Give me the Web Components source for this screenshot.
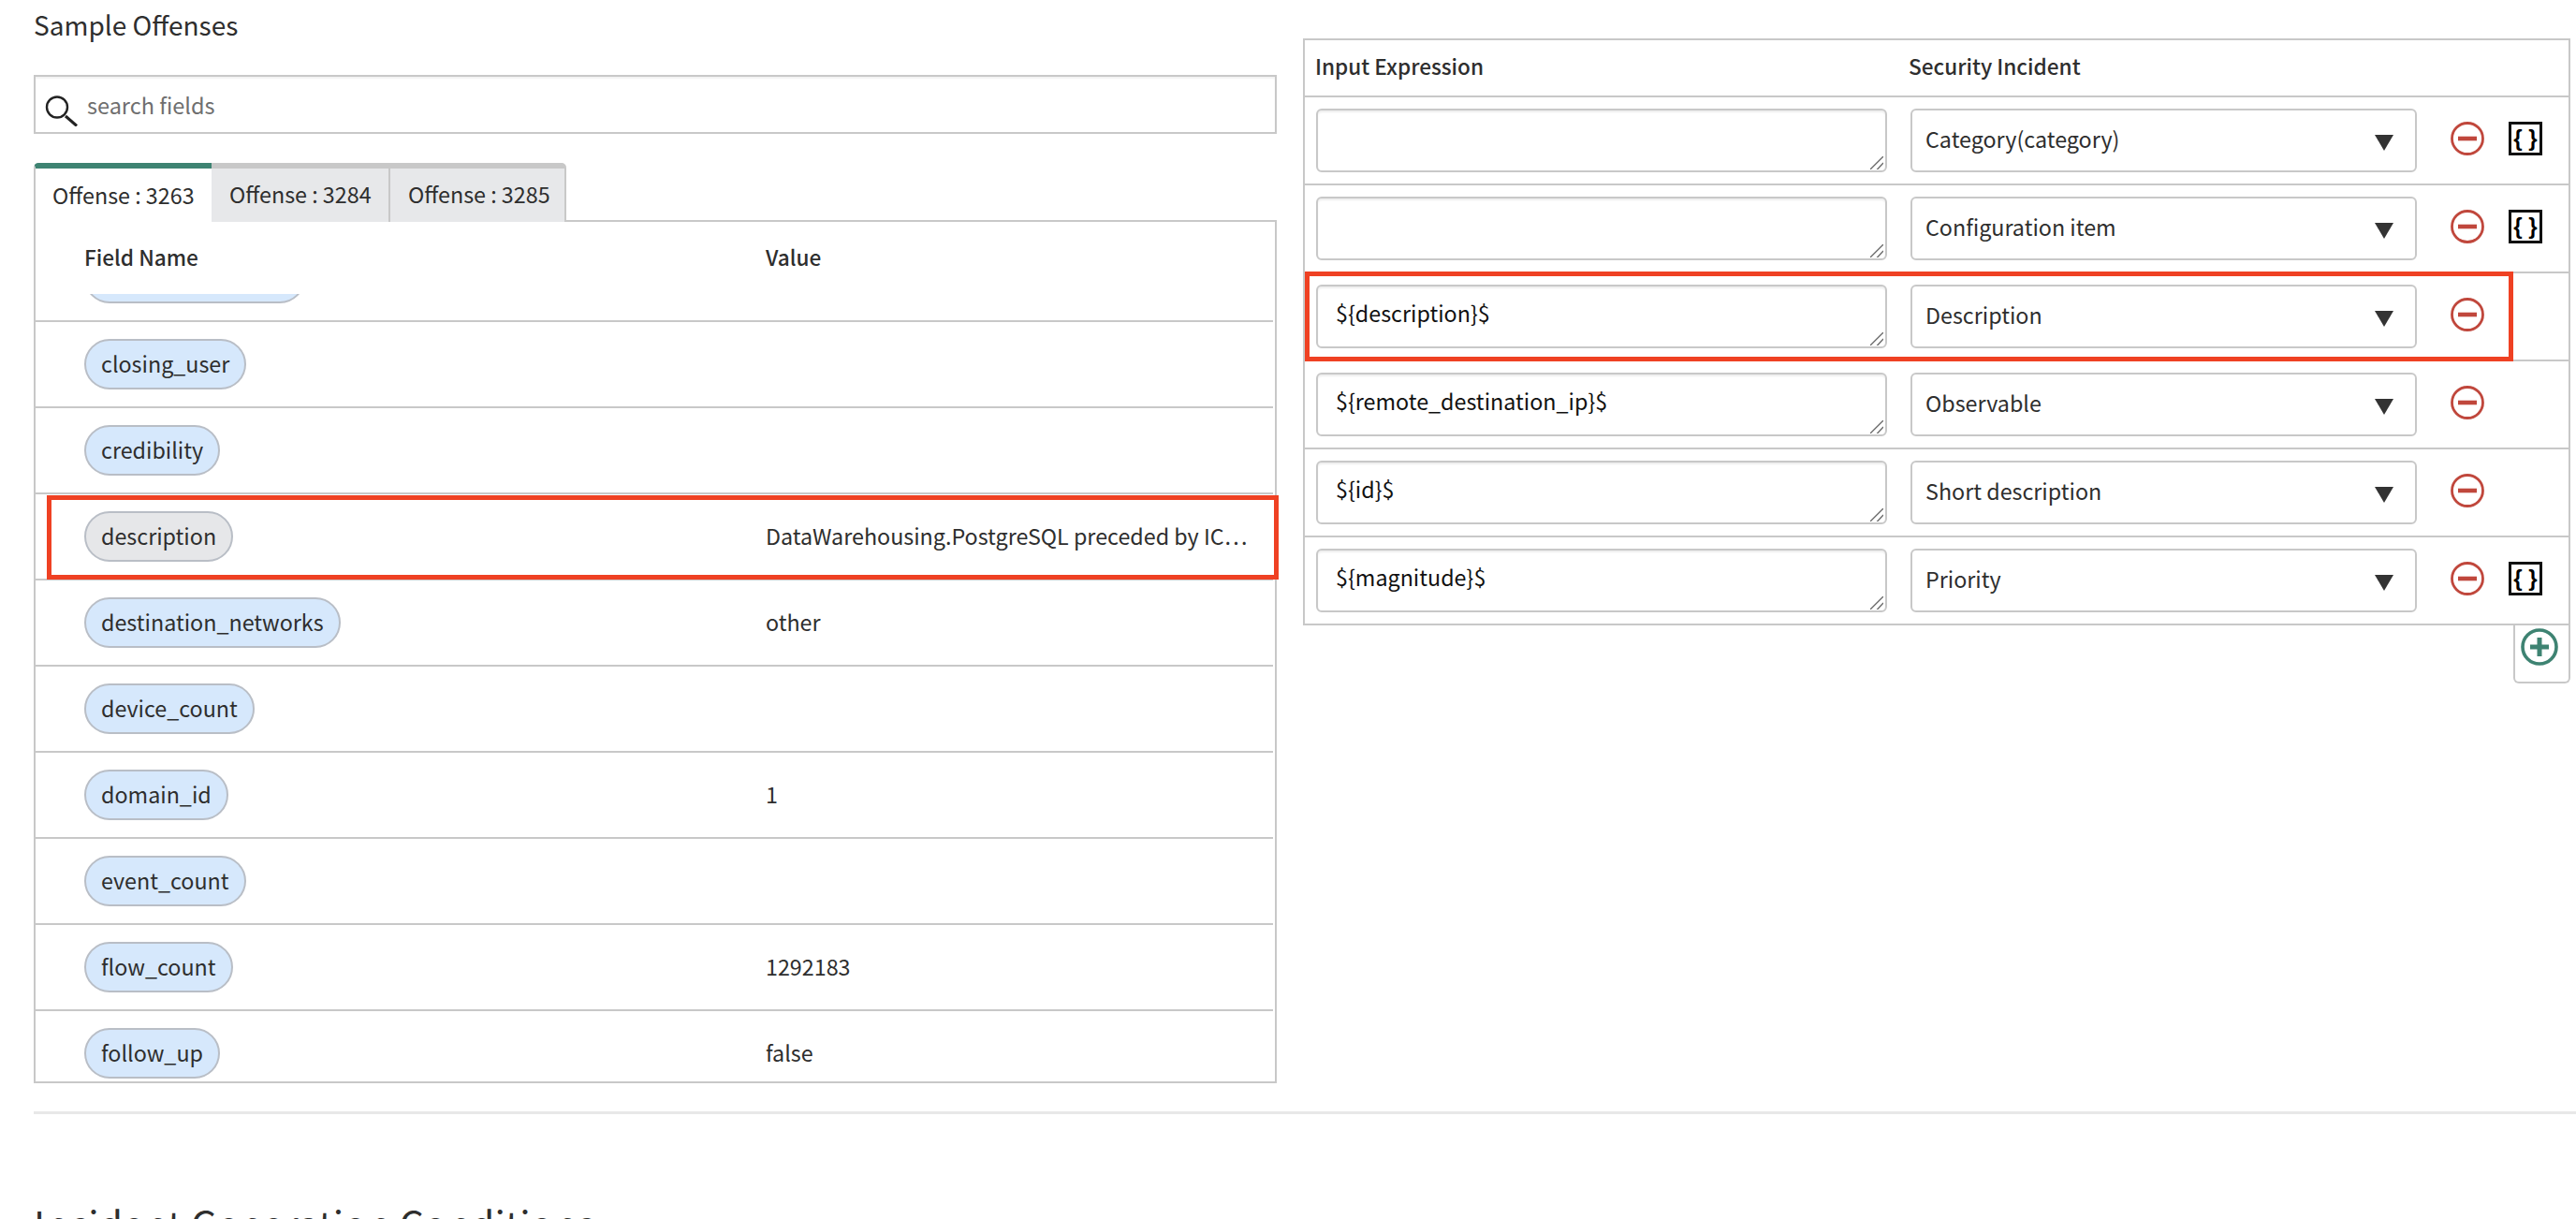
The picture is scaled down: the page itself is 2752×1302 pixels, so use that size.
<!DOCTYPE html>
<html><head><meta charset="utf-8">
<style>
html,body{margin:0;padding:0;background:#fff;height:1302px;overflow:hidden}
body{font-family:"Noto Sans CJK SC","Liberation Sans",sans-serif;color:#2e2e2e}
</style></head>
<body>
<template id="t-mapping"><style>
:host{display:block;height:1302px;overflow:hidden;box-sizing:border-box;padding:0 0 0 36px}
.cols{display:flex;align-items:flex-start;height:1187px}
.left{width:1328px;flex:none}
.right{width:1354px;flex:none;margin:41px 0 0 28px}
hr{border:0;height:3px;background:#e8e8e8;margin:0}
h2{font-size:41.2px;line-height:56px;font-weight:400;margin:88px 0 0;color:#2e2e2e;white-space:nowrap}
</style>
<div class="cols"><div class="left"><slot name="left"></slot></div><div class="right"><slot name="right"></slot></div></div>
<hr><h2><slot name="heading"></slot></h2></template>

<template id="t-sample"><style>
:host{display:block;position:relative}
.title{font-size:28px;line-height:40px;padding-top:6px;height:80px;box-sizing:border-box;color:#2e2e2e}
.search{height:63px;box-sizing:border-box;border:2px solid #c8c8c8;display:flex;align-items:center;gap:9px;padding:0 0 0 10px;font-size:23.5px;color:#6f6f6f;box-shadow:inset 0 2px 2px #f2f2f2}
.tabs{display:flex;margin-top:31px;height:63px;box-sizing:border-box;border-bottom:2px solid #c8c8c8}
.box{box-sizing:border-box;border:2px solid #c8c8c8;border-top:0;height:920px;display:flex;flex-direction:column;padding-right:2px}
.head{height:77px;flex:none;box-sizing:border-box;padding:0 0 3px 52px;display:flex;align-items:center;font-size:22.6px;font-weight:500;color:#2e2e2e}
.body{flex:1;overflow:hidden;min-height:0}
.mark{position:absolute;left:14px;top:529px;width:1316px;height:90px;box-sizing:border-box;border:5px solid #ef4123;pointer-events:none}
svg{display:block}
</style>
<div class="title"><slot name="title"></slot></div>
<div class="search"><svg width="36" height="46" viewBox="0 0 36 46" fill="none" stroke="#222"><circle cx="13" cy="25.5" r="11" stroke-width="2.4"/><path d="M22 35L34 45.5" stroke-width="3"/></svg><span><slot name="placeholder"></slot></span></div>
<div class="tabs"><slot name="tabs"></slot></div>
<div class="box"><div class="head"><slot name="head"></slot></div><div class="body"><slot></slot></div></div>
<div class="mark"></div></template>

<template id="t-tab"><style>
:host{display:flex;align-items:center;box-sizing:border-box;height:63px;width:191px;border-top:6px solid #c8c8c8;background:#e7e8ea;font-size:23.3px;color:#2e2e2e;padding:0 0 3px 19px;border-right:2px solid #c8c8c8;white-space:nowrap}
:host([active]){background:#fff;border-top-color:#3e8372;border-right:0;border-left:2px solid #c8c8c8;height:65px;width:190px;border-top-left-radius:5px;padding:0 0 3px 18px}
:host([last]){border-top-right-radius:5px;width:188px}
</style><slot></slot></template>

<template id="t-row"><style>
:host{display:flex;align-items:center;box-sizing:border-box;height:92px;border-bottom:2px solid #c8c8c8;padding-left:52px;font-size:23.3px;color:#2e2e2e}
.name{width:728px;flex:none;display:flex}
.pill{height:54px;box-sizing:border-box;border:2px solid #b9bec6;border-radius:27px;background:#d6e8fc;padding:0 16px 2px;display:flex;align-items:center;white-space:nowrap}
:host([grey]) .pill{background:#e6e7e9}
.val{white-space:nowrap;padding-bottom:3px}
</style><div class="name"><div class="pill" part="pill"><slot name="name"></slot></div></div><div class="val"><slot></slot></div></template>

<template id="t-map"><style>
:host{display:block;position:relative}
.wrap{box-sizing:border-box;border:2px solid #c8c8c8;border-bottom:0}
.hd{height:61px;box-sizing:border-box;border-bottom:2px solid #c8c8c8;display:flex;align-items:center;font-size:22.6px;font-weight:500;padding:0 0 4px 11px;color:#2e2e2e}
.add{margin-left:auto;width:61px;height:62px;box-sizing:border-box;border:2px solid #c8c8c8;border-top:0;border-radius:0 0 6px 6px;padding:3px 0 0 6px}
.addrow{display:flex}
.mark{position:absolute;left:2px;top:249px;width:1291px;height:96px;box-sizing:border-box;border:5px solid #ef4123;pointer-events:none}
svg{display:block}
</style>
<div class="wrap"><div class="hd"><slot name="head"></slot></div><slot></slot></div>
<div class="addrow"><div class="add"><svg width="40" height="40" viewBox="0 0 40 40" fill="none" stroke="#3e8372"><circle cx="20" cy="20" r="18" stroke-width="3.6"/><path d="M10 20H30M20 10V30" stroke-width="5"/></svg></div></div>
<div class="mark"></div></template>

<template id="t-maprow"><style>
:host{display:flex;box-sizing:border-box;height:94px;border-bottom:2px solid #c8c8c8;align-items:center;padding-left:12px;font-size:23.3px;color:#2e2e2e}
.ta{position:relative;width:610px;height:68px;flex:none;box-sizing:border-box;border:2px solid #c8c8c8;border-radius:6px;overflow:hidden;padding:11px 19px;line-height:34px;color:#111;box-shadow:inset 0 2px 2px #eee;white-space:nowrap}
.ta svg{position:absolute;right:2px;bottom:1px}
.sel{width:541px;height:68px;flex:none;margin-left:25px;box-sizing:border-box;border:2px solid #c8c8c8;border-radius:6px;display:flex;align-items:center;padding:0 23px 0 14px}
.sel span{flex:1;padding-bottom:4px}
.minus{margin-left:36px;flex:none;margin-top:-4px}
svg{display:block}
</style>
<div class="ta"><slot name="expr"></slot><svg width="14" height="14" viewBox="0 0 14 14" fill="none" stroke="#666" stroke-width="1.3"><path d="M0 14L14 0M7 14.5L14 7"/></svg></div>
<div class="sel"><span><slot name="field"></slot></span><svg width="20" height="17" viewBox="0 0 20 17" style="margin-top:4px"><polygon points="0,0 20,0 10,17" fill="#333"/></svg></div>
<svg class="minus" width="36" height="36" viewBox="0 0 36 36" fill="none" stroke="#c0473c"><circle cx="18" cy="18" r="16.5" stroke-width="2.8"/><path d="M8 18H28" stroke-width="4.6"/></svg>
<slot name="br"></slot></template>

<template id="t-braces"><style>
:host{display:flex;margin-left:26px;margin-top:-4px;width:36px;height:36px;flex:none;box-sizing:border-box;border:3px solid #111;align-items:center;justify-content:center;font:700 24px/1 "Liberation Sans",sans-serif;color:#000;white-space:pre}
</style><slot></slot></template>

<mapping-page>
  <sample-panel slot="left">
    <span slot="title">Sample Offenses</span>
    <span slot="placeholder">search fields</span>
    <tab-item slot="tabs" active>Offense : 3263</tab-item>
    <tab-item slot="tabs">Offense : 3284</tab-item>
    <tab-item slot="tabs" last>Offense : 3285</tab-item>
    <span slot="head" style="width:728px">Field Name</span><span slot="head">Value</span>
    <field-row style="margin-top:-62px" id="clip"></field-row>
    <field-row><span slot="name">closing_user</span></field-row>
    <field-row><span slot="name">credibility</span></field-row>
    <field-row grey><span slot="name">description</span>DataWarehousing.PostgreSQL preceded by IC…</field-row>
    <field-row><span slot="name">destination_networks</span>other</field-row>
    <field-row><span slot="name">device_count</span></field-row>
    <field-row><span slot="name">domain_id</span>1</field-row>
    <field-row><span slot="name">event_count</span></field-row>
    <field-row><span slot="name">flow_count</span>1292183</field-row>
    <field-row><span slot="name">follow_up</span>false</field-row>
  </sample-panel>
  <map-table slot="right">
    <span slot="head" style="width:634px">Input Expression</span><span slot="head">Security Incident</span>
    <map-row><span slot="field">Category(category)</span><code-braces slot="br">{ }</code-braces></map-row>
    <map-row><span slot="field">Configuration item</span><code-braces slot="br">{ }</code-braces></map-row>
    <map-row><span slot="expr">${description}$</span><span slot="field">Description</span></map-row>
    <map-row><span slot="expr">${remote_destination_ip}$</span><span slot="field">Observable</span></map-row>
    <map-row><span slot="expr">${id}$</span><span slot="field">Short description</span></map-row>
    <map-row><span slot="expr">${magnitude}$</span><span slot="field">Priority</span><code-braces slot="br">{ }</code-braces></map-row>
  </map-table>
  <span slot="heading">Incident Generation Conditions</span>
</mapping-page>

<script>
function def(tag,tid,extra){
  customElements.define(tag,class extends HTMLElement{
    constructor(){super();this.attachShadow({mode:'open'}).appendChild(document.getElementById(tid).content.cloneNode(true));}
    connectedCallback(){if(extra)extra(this);}
  });
}
def('mapping-page','t-mapping');
def('sample-panel','t-sample');
def('tab-item','t-tab');
def('field-row','t-row',el=>{
  if(el.id==='clip'){el.shadowRoot.querySelector('.pill').style.width='236px';}
});
def('map-table','t-map');
def('map-row','t-maprow');
def('code-braces','t-braces');
</script>
</body></html>
